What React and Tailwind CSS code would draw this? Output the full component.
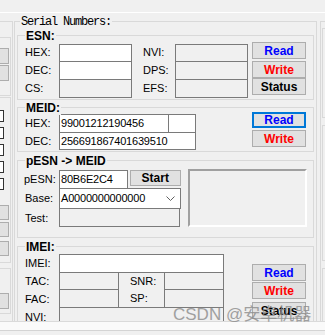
import React from "react";

const LBL = "flex items-center whitespace-nowrap";
const BOX = "border border-[#7a7a7a]";

function Btn({ className = "", children }) {
  return (
    <div
      className={`flex w-[54px] items-center justify-center border border-[#adadad] bg-[#e1e1e1] text-[12px] font-bold leading-none ${className}`}
    >
      {children}
    </div>
  );
}

function Group({ title, className = "", children }) {
  return (
    <div className={`relative border border-[#d9d9d9] ${className}`}>
      <span className="absolute left-[7px] -top-[7px] bg-[#f0f0f0] px-px text-[12px] font-bold leading-[14px] whitespace-nowrap">
        {title}
      </span>
      {children}
    </div>
  );
}

function LeftStrip() {
  return (
    <div className="w-[14px] shrink-0">
      <div className="mt-[8px] h-[320px] w-[13px] border-t border-r border-[#d9d9d9]">
        <div className="mt-[15px] h-[59px] w-[11px] border-t border-r border-b border-[#d9d9d9]">
          <div className="mt-[10px] h-[16px] w-[9px] border-t border-r border-b border-[#adadad] bg-[#e1e1e1]" />
          <div className="mt-[1px] h-[16px] w-[9px] border-t border-r border-b border-[#adadad] bg-[#e1e1e1]" />
        </div>
        <div className="mt-[1px] h-[166px] w-[11px] border-t border-r border-b border-[#d9d9d9]">
          <div className="mt-[12px] h-[12px] w-[4px] border-t border-r border-b border-[#333333] bg-white" />
          <div className="mt-[5px] h-[12px] w-[4px] border-t border-r border-b border-[#333333] bg-white" />
          <div className="mt-[5px] h-[12px] w-[4px] border-t border-r border-b border-[#333333] bg-white" />
          <div className="mt-[5px] h-[12px] w-[4px] border-t border-r border-b border-[#333333] bg-white" />
          <div className="mt-[5px] h-[12px] w-[4px] border-t border-r border-b border-[#333333] bg-white" />
          <div className="mt-[15px] h-[15px] w-[9px] border-t border-r border-b border-[#adadad] bg-[#e1e1e1]" />
          <div className="mt-[2px] h-[15px] w-[9px] border-t border-r border-b border-[#adadad] bg-[#e1e1e1]" />
          <div className="mt-[4px] h-[15px] w-[9px] border-t border-r border-b border-[#adadad] bg-[#e1e1e1]" />
        </div>
        <div className="mt-[5px] h-[46px] w-[11px] border-t border-r border-b border-[#d9d9d9]">
          <div className="mt-[24px] h-[16px] w-[9px] border-t border-r border-b border-[#adadad] bg-[#e1e1e1]" />
        </div>
      </div>
    </div>
  );
}

function RightStrip() {
  return (
    <div className="min-w-0 flex-1">
      <div className="ml-[3px] mt-[8px] h-[320px] border-l border-t border-[#d9d9d9]">
        <div className="ml-[1px] mt-[6px] h-[90px] border-l border-t border-b border-[#d9d9d9]" />
        <div className="ml-[1px] mt-[7px] h-[136px] border-l border-t border-b border-[#d9d9d9]" />
        <div className="ml-[1px] mt-[7px] h-[60px] border-l border-t border-b border-[#d9d9d9]" />
      </div>
    </div>
  );
}

function EsnGroup() {
  return (
    <Group title="ESN:" className="ml-[2px] mt-[13px] h-[65px] w-[297px]">
      <div className="flex pl-[7px] pt-[6px]">
        <div className="mt-[1px] w-[34px]">
          <div className={`${LBL} h-[18px]`}>HEX:</div>
          <div className={`${LBL} h-[18px]`}>DEC:</div>
          <div className={`${LBL} h-[18px]`}>CS:</div>
        </div>
        <div className="mt-[2px] w-[73px]">
          <div className={`${BOX} h-[18px] bg-white`} />
          <div className={`${BOX} -mt-px h-[19px] bg-white`} />
          <div className={`${BOX} -mt-px h-[19px] bg-[#f0f0f0]`} />
        </div>
        <div className="ml-[11px] mt-[1px] w-[32px]">
          <div className={`${LBL} h-[18px]`}>NVI:</div>
          <div className={`${LBL} h-[18px]`}>DPS:</div>
          <div className={`${LBL} h-[18px]`}>EFS:</div>
        </div>
        <div className="mt-[2px] w-[73px]">
          <div className={`${BOX} h-[18px] bg-[#f0f0f0]`} />
          <div className={`${BOX} -mt-px h-[19px] bg-[#f0f0f0]`} />
          <div className={`${BOX} -mt-px h-[19px] bg-[#f0f0f0]`} />
        </div>
        <div className="ml-[4px]">
          <Btn className="h-[17px] text-[#0000ff]">Read</Btn>
          <Btn className="mt-[2px] h-[17px] text-[#ff0000]">Write</Btn>
          <Btn className="h-[17px] text-black">Status</Btn>
        </div>
      </div>
    </Group>
  );
}

function MeidGroup() {
  return (
    <Group title="MEID:" className="ml-[2px] mt-[7px] h-[45px] w-[297px]">
      <div className="flex pl-[7px] pt-[4px]">
        <div className="mt-[2px] w-[34px]">
          <div className={`${LBL} h-[19px]`}>HEX:</div>
          <div className={`${LBL} h-[17px]`}>DEC:</div>
        </div>
        <div className="mt-[2px] w-[137px] text-[11px] tracking-[-0.2px]">
          <div className="flex">
            <div className={`${BOX} flex h-[19px] w-[110px] items-center bg-white pl-px`}>99001212190456</div>
            <div className={`${BOX} -ml-px h-[19px] w-[28px] bg-white`} />
          </div>
          <div className={`${BOX} -mt-px flex h-[18px] w-[137px] items-center bg-white pl-px`}>256691867401639510</div>
        </div>
        <div className="ml-[56px]">
          <div className="flex h-[16px] w-[54px] items-center justify-center border-2 border-[#0078d7] bg-[#e1e1e1] text-[12px] font-bold leading-none text-[#0000ff]">
            Read
          </div>
          <Btn className="mt-[2px] h-[17px] text-[#ff0000]">Write</Btn>
        </div>
      </div>
    </Group>
  );
}

function PesnGroup() {
  return (
    <Group title="pESN -> MEID" className="ml-[2px] mt-[8px] h-[78px] w-[297px]">
      <div className="flex pl-[7px] pt-[8px]">
        <div className="mt-[1px] w-[34px]">
          <div className={`${LBL} -ml-px h-[18px]`}>pESN:</div>
          <div className={`${LBL} h-[21px]`}>Base:</div>
          <div className={`${LBL} h-[19px]`}>Test:</div>
        </div>
        <div className="mt-[1px] w-[122px] tracking-[-0.2px]">
          <div className="flex items-start">
            <div className={`${BOX} flex h-[19px] w-[72px] items-center bg-white pl-px`}>80B6E2C4</div>
            <Btn className="ml-[2px] h-[16px] w-[47px] tracking-normal">Start</Btn>
          </div>
          <div className={`${BOX} -mt-px flex h-[21px] w-[122px] items-center justify-between bg-white pl-px pr-[5px]`}>
            <span>A0000000000000</span>
            <svg width="9" height="5" viewBox="0 0 9 5" className="block">
              <polyline points="0.5,0.5 4.5,4.5 8.5,0.5" fill="none" stroke="#606060" strokeWidth="1" />
            </svg>
          </div>
          <div className={`${BOX} -mt-px h-[19px] w-[121px] bg-[#f0f0f0]`} />
        </div>
        <div className="ml-[7px] h-[58px] w-[119px] border-2 border-t-[#a0a0a0] border-l-[#a0a0a0] border-r-white border-b-white" />
      </div>
    </Group>
  );
}

function ImeiGroup() {
  return (
    <Group title="IMEI:" className="ml-[2px] mt-[8px] h-[100px] w-[297px]">
      <div className="flex pl-[7px] pt-[7px]">
        <div className="w-[34px]">
          <div className={`${LBL} h-[19px]`}>IMEI:</div>
          <div className={`${LBL} h-[17px]`}>TAC:</div>
          <div className={`${LBL} h-[18px]`}>FAC:</div>
          <div className={`${LBL} h-[18px]`}>NVI:</div>
        </div>
        <div className="w-[165px]">
          <div className={`${BOX} h-[19px] w-[165px] bg-white`} />
          <div className="-mt-px flex h-[18px]">
            <div className={`${BOX} h-[18px] w-[60px] bg-[#f0f0f0]`} />
            <div className={`${LBL} h-[18px] w-[45px] pl-[11px]`}>SNR:</div>
            <div className={`${BOX} h-[18px] w-[60px] bg-[#f0f0f0]`} />
          </div>
          <div className="-mt-px flex h-[19px]">
            <div className={`${BOX} h-[19px] w-[60px] bg-[#f0f0f0]`} />
            <div className={`${LBL} h-[19px] w-[45px] pl-[11px]`}>SP:</div>
            <div className={`${BOX} h-[19px] w-[60px] bg-[#f0f0f0]`} />
          </div>
          <div className={`${BOX} -mt-px h-[19px] w-[165px] bg-[#f0f0f0]`} />
        </div>
        <div className="ml-[28px]">
          <Btn className="mt-[10px] h-[17px] text-[#0000ff]">Read</Btn>
          <Btn className="mt-[1px] h-[17px] text-[#ff0000]">Write</Btn>
          <Btn className="mt-[3px] h-[17px] text-black">Status</Btn>
        </div>
      </div>
    </Group>
  );
}

export default function App() {
  return (
    <div className="relative h-[335px] w-[325px] overflow-hidden bg-[#f0f0f0] font-['Liberation_Sans',Arial,sans-serif] text-[11px] leading-none text-black">
      <div className="h-[12px]" />
      <div className="h-px bg-white" />
      <div className="flex h-[308px] overflow-hidden">
        <LeftStrip />
        <div className="relative mt-[8px] h-[320px] w-[303px] shrink-0 border border-[#d9d9d9]">
          <span className="absolute left-[5px] -top-[6px] bg-[#f0f0f0] px-px font-['Liberation_Mono',monospace] text-[12px] leading-[12px] tracking-[-1.2px] whitespace-nowrap">
            Serial Numbers:
          </span>
          <EsnGroup />
          <MeidGroup />
          <PesnGroup />
          <ImeiGroup />
        </div>
        <RightStrip />
      </div>
      <div className="h-px bg-[#dadada]" />
      <div className="h-[8px] bg-[#fafafa]" />
      <div className="h-px bg-[#d4d4d4]" />
      <div className="pointer-events-none absolute left-[173px] top-[306px] whitespace-nowrap font-['Liberation_Sans','Noto_Sans_CJK_SC',sans-serif] text-[17px] leading-[17px] text-[#8c8c8c] opacity-80">
        CSDN @安卓机器
      </div>
    </div>
  );
}
